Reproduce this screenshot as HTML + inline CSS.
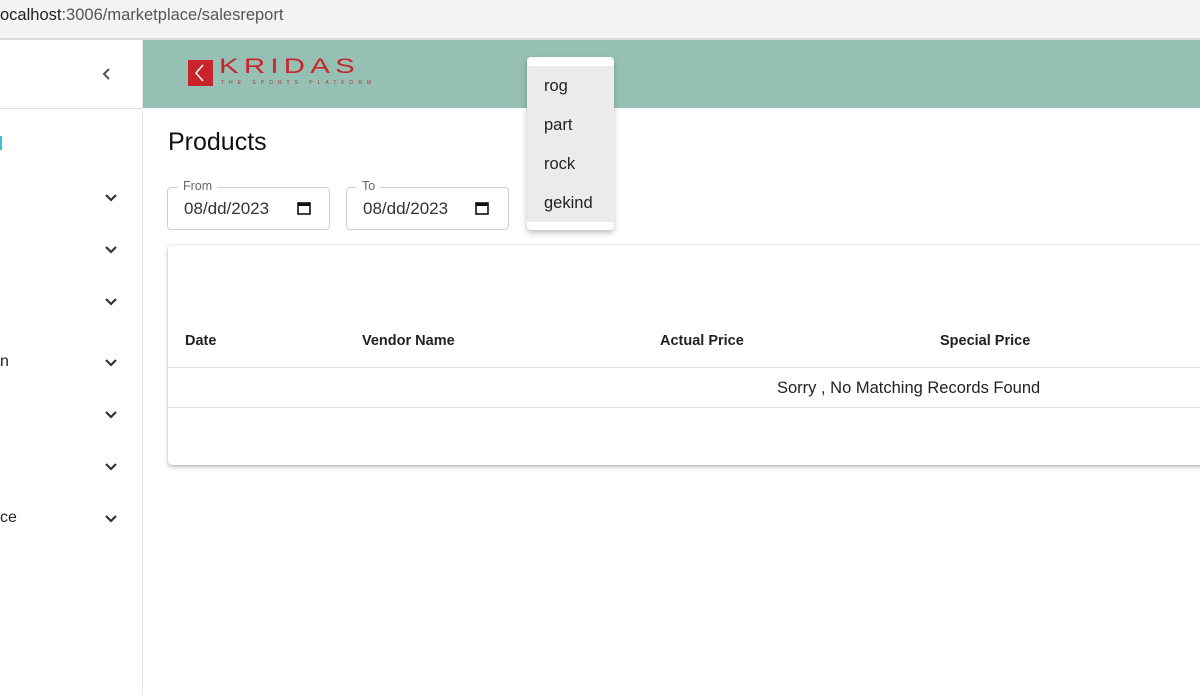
<!DOCTYPE html>
<html><head><style>
*{margin:0;padding:0;box-sizing:border-box}
body{width:1200px;height:695px;overflow:hidden;background:#fff;font-family:"Liberation Sans",Roboto,sans-serif;position:relative;color:#222}
.a{position:absolute}
.chev{position:absolute;left:104px;width:14px;height:10px}
</style></head><body>
<div class="a" style="left:0;top:0;width:1200px;height:38px;background:#f3f3f3"></div>
<div class="a" style="left:0;top:6px;font-size:16.5px;color:#202124">ocalhost<span style="color:#555">:3006/marketplace/salesreport</span></div>
<div class="a" style="left:0;top:38px;width:1200px;height:2px;background:#dcdcdc"></div>
<div class="a" style="left:142px;top:40px;width:1px;height:655px;background:#e6e6e6"></div>
<div class="a" style="left:0;top:108px;width:142px;height:1px;background:#e0e0e0"></div>
<svg class="a" style="left:100px;top:67px" width="14" height="14" viewBox="0 0 14 14"><path d="M9 2L4 7l5 5" fill="none" stroke="#555" stroke-width="2"/></svg>
<div class="a" style="left:0;top:136px;width:2px;height:14px;background:#3bc0d0"></div>
<div class="a" style="left:0;top:353px;font-size:16px">n</div>
<div class="a" style="left:0;top:509px;font-size:16px">ce</div>
<svg class="chev" style="top:193px" viewBox="0 0 14 10"><path d="M2 2l5 5 5-5" fill="none" stroke="#333" stroke-width="2.2"/></svg>
<svg class="chev" style="top:245px" viewBox="0 0 14 10"><path d="M2 2l5 5 5-5" fill="none" stroke="#333" stroke-width="2.2"/></svg>
<svg class="chev" style="top:297px" viewBox="0 0 14 10"><path d="M2 2l5 5 5-5" fill="none" stroke="#333" stroke-width="2.2"/></svg>
<svg class="chev" style="top:358px" viewBox="0 0 14 10"><path d="M2 2l5 5 5-5" fill="none" stroke="#333" stroke-width="2.2"/></svg>
<svg class="chev" style="top:410px" viewBox="0 0 14 10"><path d="M2 2l5 5 5-5" fill="none" stroke="#333" stroke-width="2.2"/></svg>
<svg class="chev" style="top:462px" viewBox="0 0 14 10"><path d="M2 2l5 5 5-5" fill="none" stroke="#333" stroke-width="2.2"/></svg>
<svg class="chev" style="top:514px" viewBox="0 0 14 10"><path d="M2 2l5 5 5-5" fill="none" stroke="#333" stroke-width="2.2"/></svg>
<div class="a" style="left:143px;top:40px;width:1057px;height:68px;background:#96c0b4"></div>
<div class="a" style="left:188px;top:60px;width:25px;height:26px;background:#c9232b"></div>
<svg class="a" style="left:188px;top:60px" width="25" height="26"><path d="M15 5l-7 8 7 8" fill="none" stroke="#fff" stroke-width="1.5"/></svg>
<div class="a" style="left:219px;top:54px;font-size:28px;letter-spacing:5px;color:#c9232b;transform:scale(1.05,0.75);transform-origin:top left">KRIDAS</div>
<div class="a" style="left:221px;top:80px;font-size:5px;letter-spacing:5px;color:#b03030">THE SPORTS PLATFORM</div>
<div class="a" style="left:168px;top:128px;font-size:25px;color:#111">Products</div>
<div class="a" style="left:167px;top:187px;width:163px;height:43px;border:1px solid #d0d0d0;border-radius:4px"></div>
<div class="a" style="left:178px;top:179px;padding:0 5px;background:#fff;font-size:12.5px;color:#666">From</div>
<div class="a" style="left:184px;top:199px;font-size:17px;color:#333">08/dd/2023</div>
<svg class="a" style="left:296px;top:200px" width="16" height="16"><rect x="2" y="3" width="12" height="11" fill="none" stroke="#111" stroke-width="1.6"/><rect x="2" y="3" width="12" height="3" fill="#111"/></svg>
<div class="a" style="left:346px;top:187px;width:163px;height:43px;border:1px solid #d0d0d0;border-radius:4px"></div>
<div class="a" style="left:357px;top:179px;padding:0 5px;background:#fff;font-size:12.5px;color:#666">To</div>
<div class="a" style="left:363px;top:199px;font-size:17px;color:#333">08/dd/2023</div>
<svg class="a" style="left:474px;top:200px" width="16" height="16"><rect x="2" y="3" width="12" height="11" fill="none" stroke="#111" stroke-width="1.6"/><rect x="2" y="3" width="12" height="3" fill="#111"/></svg>
<div class="a" style="left:168px;top:245px;width:1040px;height:220px;background:#fff;box-shadow:0 2px 4px rgba(0,0,0,.25),0 0 2px rgba(0,0,0,.12);border-radius:4px"></div>
<div class="a" style="left:185px;top:333px;font-size:14.5px;font-weight:bold;color:#222">Date</div>
<div class="a" style="left:362px;top:333px;font-size:14.5px;font-weight:bold;color:#222">Vendor Name</div>
<div class="a" style="left:660px;top:333px;font-size:14.5px;font-weight:bold;color:#222">Actual Price</div>
<div class="a" style="left:940px;top:333px;font-size:14.5px;font-weight:bold;color:#222">Special Price</div>
<div class="a" style="left:168px;top:367px;width:1032px;height:1px;background:#e0e0e0"></div>
<div class="a" style="left:777px;top:379px;font-size:16.5px;color:#222">Sorry , No Matching Records Found</div>
<div class="a" style="left:168px;top:407px;width:1032px;height:1px;background:#e0e0e0"></div>
<div class="a" style="left:527px;top:57px;width:87px;height:173px;background:#fff;border-radius:4px;box-shadow:0 3px 6px rgba(0,0,0,.25)"></div>
<div class="a" style="left:527px;top:66px;width:87px;height:156px;background:#ebebeb"></div>
<div class="a" style="left:544px;top:77px;font-size:16.5px">rog</div>
<div class="a" style="left:544px;top:116px;font-size:16.5px">part</div>
<div class="a" style="left:544px;top:155px;font-size:16.5px">rock</div>
<div class="a" style="left:544px;top:194px;font-size:16.5px">gekind</div>
</body></html>
